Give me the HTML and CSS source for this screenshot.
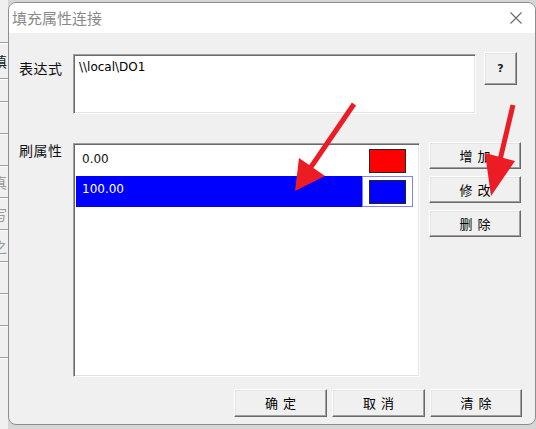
FILE: index.html
```html
<!DOCTYPE html>
<html lang="zh">
<head>
<meta charset="utf-8">
<title>填充属性连接</title>
<link rel="stylesheet" href="styles.css">
</head>
<body>
<div class="screen">
  <div class="strip">
    <div class="strip-cell c1"></div>
    <div class="strip-cell c2"><span class="strip-char dark">填</span></div>
    <div class="strip-cell c3"></div>
    <div class="strip-cell"></div>
    <div class="strip-cell"></div>
    <div class="strip-cell"><span class="strip-char">真</span></div>
    <div class="strip-cell"><span class="strip-char">写</span></div>
    <div class="strip-cell"><span class="strip-char">之</span></div>
    <div class="strip-cell"></div>
    <div class="strip-cell"></div>
    <div class="strip-cell"></div>
  </div>

  <div class="dialog">
    <div class="titlebar">
      <span class="title">填充属性连接</span>
      <svg class="close" width="12" height="12" viewBox="0 0 12 12" aria-hidden="true">
        <path d="M0.5 0.5 L11.5 11.5 M11.5 0.5 L0.5 11.5" stroke="#6a6a6a" stroke-width="1.1" fill="none"/>
      </svg>
    </div>

    <div class="body">
      <div class="row-expr">
        <div class="label label-expr">表达式</div>
        <div class="expr sunken">\\local\DO1</div>
        <div class="btn help-btn">?</div>
      </div>

      <div class="row-list">
        <div class="label label-list">刷属性</div>
        <div class="list sunken">
          <div class="item">
            <span class="val">0.00</span>
            <span class="swatch-cell"><span class="swatch red"></span></span>
          </div>
          <div class="item sel">
            <span class="val">100.00</span>
            <span class="swatch-cell"><span class="swatch blue"></span></span>
          </div>
        </div>
        <div class="side">
          <div class="btn side-btn">增加</div>
          <div class="btn side-btn">修改</div>
          <div class="btn side-btn">删除</div>
        </div>
      </div>

      <div class="row-bottom">
        <div class="btn foot-btn">确定</div>
        <div class="btn foot-btn">取消</div>
        <div class="btn foot-btn last">清除</div>
      </div>
    </div>
  </div>

  <svg class="arrows" width="536" height="429" viewBox="0 0 536 429" aria-hidden="true">
    <line x1="354" y1="104" x2="311" y2="167" stroke="#ec1c24" stroke-width="5" stroke-linecap="butt"/>
    <polygon points="299,158 325,176 295,191" fill="#ec1c24"/>
    <line x1="513" y1="105" x2="500" y2="160" stroke="#ec1c24" stroke-width="5" stroke-linecap="butt"/>
    <polygon points="485,153 515,161 491,196" fill="#ec1c24"/>
  </svg>
</div>
</body>
</html>
```

FILE: styles.css
```css
* { box-sizing: border-box; }

html, body {
  margin: 0;
  padding: 0;
  background: #dcdcdc;
}

.screen {
  position: relative;
  width: 536px;
  height: 429px;
  display: flex;
  overflow: hidden;
  background: #d6d6d6;
  font-family: "Noto Sans CJK SC", "Noto Sans", sans-serif;
}

/* window behind the dialog */
.strip {
  width: 8px;
  flex: none;
  height: 429px;
  background: #f0f0f0;
  display: flex;
  flex-direction: column;
  overflow: hidden;
}
.strip-cell {
  flex: none;
  height: 32px;
  border-bottom: 1px solid #9c9c9c;
  box-shadow: 0 1px 0 #ffffff;
  overflow: hidden;
  display: flex;
  align-items: center;
}
.strip-cell.c1 { height: 43px; }
.strip-cell.c2 { height: 36px; }
.strip-cell.c3 { height: 23px; }
.strip-char {
  margin-left: -7px;
  font-size: 14px;
  line-height: 16px;
  color: #9a9a9a;
}
.strip-char.dark { color: #222; }

/* dialog */
.dialog {
  flex: none;
  width: 528px;
  height: 423px;
  margin-top: 2px;
  border: 1px solid #8e8e8e;
  border-radius: 8px;
  background: #f0f0f0;
  overflow: hidden;
  display: flex;
  flex-direction: column;
}

.titlebar {
  flex: none;
  height: 30px;
  background: #ffffff;
  display: flex;
  align-items: center;
  justify-content: space-between;
  padding: 0 13px 0 3px;
}
.title {
  font-size: 15px;
  color: #8a8a8a;
  line-height: 20px;
  margin-top: -1px;
}
.close { display: block; margin-top: 0; }

.body {
  flex: 1;
  padding: 19px 13px 0 10px;
  display: flex;
  flex-direction: column;
}

.label {
  width: 54px;
  flex: none;
  font-size: 14px;
  line-height: 20px;
  color: #111;
  letter-spacing: 0.5px;
}
.label-expr { margin-top: 6px; }
.label-list { margin-top: -2px; }

.sunken {
  background: #ffffff;
  border: 1px solid;
  border-color: #a0a0a0 #ffffff #ffffff #a0a0a0;
  box-shadow: inset 1px 1px 0 #696969, inset -1px -1px 0 #e3e3e3;
}

.btn {
  background: #f0f0f0;
  border: 1px solid;
  border-color: #ffffff #696969 #696969 #ffffff;
  box-shadow: inset -1px -1px 0 #a0a0a0, inset 1px 1px 0 #e3e3e3;
  display: flex;
  align-items: center;
  justify-content: center;
  color: #000;
}

.row-expr {
  display: flex;
  align-items: flex-start;
}
.expr {
  width: 403px;
  height: 60px;
  margin-top: 2px;
  padding: 5px 5px;
  font-family: "DejaVu Sans", sans-serif;
  font-size: 12px;
  line-height: 14px;
  color: #000;
}
.help-btn {
  width: 33px;
  height: 33px;
  margin-left: 8px;
  font-family: "DejaVu Sans", sans-serif;
  font-weight: bold;
  font-size: 11px;
  color: #1a1a2a;
}

.row-list {
  display: flex;
  align-items: flex-start;
  margin-top: 28px;
}
.list {
  width: 347px;
  height: 234px;
  margin-top: 1px;
  padding: 2px 0 0 2px;
}
.item {
  display: flex;
  align-items: center;
  height: 30px;
  margin-right: 6px;
  font-family: "DejaVu Sans", sans-serif;
  font-size: 12px;
  color: #111;
}
.item.sel {
  height: 31px;
  background: #0000ff;
  color: #ffffff;
}
.val {
  flex: 1;
  padding-left: 6px;
  padding-bottom: 5px;
  line-height: 14px;
}
.swatch-cell {
  width: 51px;
  height: 100%;
  display: flex;
  align-items: center;
  justify-content: center;
}
.item.sel .swatch-cell {
  background: #ffffff;
  border: 1px solid #8080ff;
}
.swatch {
  width: 37px;
  height: 24px;
  border: 1px solid #262626;
}
.swatch.red { background: #ff0000; }
.swatch.blue { background: #0000ff; }

.side {
  margin-left: 9px;
  display: flex;
  flex-direction: column;
  gap: 7px;
}
.side-btn, .foot-btn {
  font-size: 13px;
  letter-spacing: 5px;
  padding-left: 5px;
  line-height: 16px;
}
.side-btn {
  width: 92px;
  height: 27px;
}

.row-bottom {
  display: flex;
  justify-content: flex-end;
  gap: 5px;
  margin-top: 12px;
}
.foot-btn {
  width: 93px;
  height: 28px;
}
.foot-btn.last { width: 92px; }

.arrows {
  position: absolute;
  left: 0;
  top: 0;
  pointer-events: none;
}
```
